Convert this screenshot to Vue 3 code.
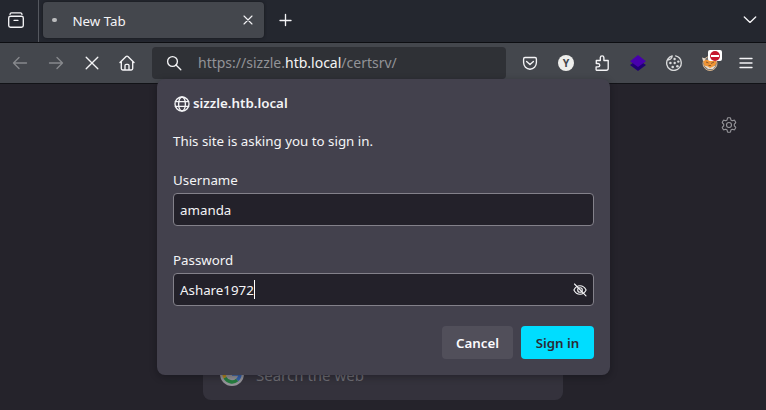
<script setup>
import { ref } from 'vue'

const username = ref('amanda')
const password = ref('Ashare1972')
</script>

<template>
  <div class="browser">
    <header class="tabstrip">
      <div class="recent">
        <svg width="18" height="18" viewBox="0 0 18 18" class="line">
          <path d="M3 3.3Q3.2 1.8 4.5 1.8H13.5Q14.8 1.8 15 3.3" />
          <rect x="1.7" y="5.2" width="14.6" height="11" rx="1.8" />
          <path d="M7 9.3H11" />
        </svg>
      </div>
      <div class="tab">
        <span class="dot"></span>
        <span class="tab-title">New Tab</span>
        <svg width="10" height="10" viewBox="0 0 10 10" class="line thin"><path d="M1 1L9 9M9 1L1 9" /></svg>
      </div>
      <svg class="line plus" width="14" height="14" viewBox="0 0 14 14"><path d="M6.5 1.5V12.5M1 7.5H12" /></svg>
      <svg class="line chevron" width="14" height="10" viewBox="0 0 14 10"><path d="M1.3 2L7 7.4L12.7 2" /></svg>
    </header>

    <nav class="toolbar">
      <div class="cell dim">
        <svg width="16" height="16" viewBox="0 0 16 16" class="line"><path d="M14.5 8H1.5M7 2.5L1.5 8L7 13.5" /></svg>
      </div>
      <div class="cell dim">
        <svg width="16" height="16" viewBox="0 0 16 16" class="line"><path d="M1.5 8H14.5M9 2.5L14.5 8L9 13.5" /></svg>
      </div>
      <div class="cell">
        <svg width="16" height="16" viewBox="0 0 16 16" class="line"><path d="M2.2 2.2L13.8 13.8M13.8 2.2L2.2 13.8" /></svg>
      </div>
      <div class="cell home">
        <svg width="16" height="16" viewBox="0 0 16 16" class="line">
          <path d="M1 7.6L7.1 1.5Q8 .7 8.9 1.5L15 7.6M2.3 6.5V13.6Q2.3 15 3.7 15H12.3Q13.7 15 13.7 13.6V6.5M6 15V10.5Q6 9.3 7.2 9.3H8.8Q10 9.3 10 10.5V15" />
        </svg>
      </div>

      <div class="urlbar">
        <svg width="16" height="16" viewBox="0 0 16 16" class="line">
          <circle cx="6.5" cy="6.5" r="4.9" /><path d="M10 10L14.8 14.8" />
        </svg>
        <span class="url">https://sizzle.<b>htb.local</b>/certsrv/</span>
      </div>

      <div class="cell">
        <svg width="16" height="16" viewBox="0 0 16 16" class="line">
          <path d="M3 2.5H13Q14.4 2.5 14.4 4V7.6A6.4 6.6 0 0 1 1.6 7.6V4Q1.6 2.5 3 2.5ZM4.6 6.4L8 9.6L11.4 6.4" />
        </svg>
      </div>
      <div class="cell"><span class="avatar">Y</span></div>
      <div class="cell">
        <svg width="16" height="18" viewBox="0 0 16 18" class="line">
          <path d="M2.5 16.2H12.3Q14.2 16.2 14.2 14.5V6.5H9.9V3.6Q9.8 1.9 8.1 1.9T6.3 3.6V6.5H2.3V9.5H4Q5.8 9.7 5.8 11.2T4 12.9H2.1V15.3Q2 16.2 3 16.2Z" />
        </svg>
      </div>
      <div class="cell">
        <svg width="16" height="18" viewBox="0 0 16 18">
          <path d="M0 11L3 9H13L16 11L8 17Z" fill="#200073" />
          <path d="M8 1L16 7.2L8 13L0 7.2Z" fill="#4800ad" />
        </svg>
      </div>
      <div class="cell">
        <svg width="16" height="16" viewBox="0 0 16 16" class="line cookie">
          <path d="M6.2 1A7.3 7.3 0 1 0 15.2 7.2A7.3 7.3 0 0 0 9.6 .9M6.2 1Q6 3.4 4.4 4.2Q2.2 5 1 5.4" />
          <g class="chips"><circle cx="8.6" cy="4" r="1.2" /><circle cx="4.4" cy="8" r="1.3" /><circle cx="8.7" cy="8" r="1.2" /><circle cx="12.3" cy="6.6" r="1.2" /><circle cx="6.7" cy="12" r="1.3" /><circle cx="11.4" cy="11.2" r="1.3" /></g>
        </svg>
      </div>
      <div class="cell proxy">
        <svg width="16" height="16" viewBox="0 0 16 16">
          <circle cx="8" cy="8.5" r="7" fill="#70747a" stroke="#d9b48a" />
          <path d="M1 4L5 5L11 4L14.5 7L13.5 10L10 13H6L2.5 11L1.5 7Z" fill="#ef9435" />
          <path d="M0 2.5L3.5 3.5L3 5.5L1 6ZM2 10.5L6 11.5L8 13L11 11.5L14 10.5L11 14H6Z" fill="#e8dccd" />
          <path d="M4 7L6.5 8M9 8.5L12 7M6.5 10.5H9" stroke="#8a5a30" fill="none" />
        </svg>
        <span class="badge"><i></i></span>
      </div>
      <div class="cell">
        <svg width="14" height="14" viewBox="0 0 14 14" class="line"><path d="M1 2.5H13M1 7H13M1 11.5H13" /></svg>
      </div>
    </nav>

    <main class="page">
      <svg class="gear line" width="16" height="16" viewBox="0 0 16 16">
        <path d="M7 .8H9Q9.5 .8 9.6 1.4L9.9 3L11.3 3.8L12.9 3.2Q13.4 3 13.7 3.5L14.7 5.2Q14.9 5.7 14.5 6L13.3 7.1V8.9L14.5 10Q14.9 10.3 14.7 10.8L13.7 12.5Q13.4 13 12.9 12.8L11.3 12.2L9.9 13L9.6 14.6Q9.5 15.2 9 15.2H7Q6.5 15.2 6.4 14.6L6.1 13L4.7 12.2L3.1 12.8Q2.6 13 2.3 12.5L1.3 10.8Q1.1 10.3 1.5 10L2.7 8.9V7.1L1.5 6Q1.1 5.7 1.3 5.2L2.3 3.5Q2.6 3 3.1 3.2L4.7 3.8L6.1 3L6.4 1.4Q6.5 .8 7 .8Z" />
        <circle cx="8" cy="8" r="2.5" />
      </svg>
      <div class="search">
        <svg width="24" height="24" viewBox="0 0 24 24">
          <circle cx="12" cy="12" r="12" fill="#949399" />
          <g fill="none" stroke-width="3.4">
            <path d="M18 6.5A8 8 0 0 0 5 8.2" stroke="#a43b35" />
            <path d="M5 8.2A8 8 0 0 0 5 15.8" stroke="#b5891b" />
            <path d="M5 15.8A8 8 0 0 0 17.2 18" stroke="#267d40" />
            <path d="M17.2 18A8 8 0 0 0 20 12H12" stroke="#3562ad" />
          </g>
        </svg>
        <span>Search the web</span>
      </div>
    </main>

    <section class="dialog">
      <div class="origin">
        <svg width="16" height="16" viewBox="0 0 16 16" class="line">
          <circle cx="8" cy="8" r="7" /><ellipse cx="8" cy="8" rx="3.4" ry="7" /><path d="M1.4 5.6H14.6M1.4 10.4H14.6" />
        </svg>
        <strong>sizzle.htb.local</strong>
      </div>
      <p class="message">This site is asking you to sign in.</p>
      <div class="label">Username</div>
      <div class="field">{{ username }}</div>
      <div class="label second">Password</div>
      <div class="field">
        {{ password }}<span class="caret"></span>
        <svg width="14" height="14" viewBox="0 0 14 14" class="line eye">
          <path d="M.9 7Q3 2.7 7 2.7T13.1 7Q11 11.3 7 11.3T.9 7Z" /><circle cx="7" cy="7" r="2.3" /><path d="M1.5 1L13 12.8" />
        </svg>
      </div>
      <div class="actions">
        <button class="cancel">Cancel</button>
        <button class="primary">Sign in</button>
      </div>
    </section>
  </div>
</template>

<style>
body { margin: 0; background: #25232b; }
</style>

<style scoped>
.browser {
  position: relative;
  width: 766px;
  height: 410px;
  overflow: hidden;
  display: flex;
  flex-direction: column;
  background: #25232b;
  color: #f4f4f6;
  font-family: "Noto Sans", sans-serif;
  font-size: 13.33px;
}
svg { display: block; flex: none; }
.line {
  fill: none;
  stroke: currentColor;
  stroke-width: 1.35;
  stroke-linecap: round;
  stroke-linejoin: round;
}
.thin { stroke-width: 1.1; }
.tabstrip {
  box-sizing: border-box;
  height: 43px;
  flex: none;
  display: flex;
  background: #24272f;
  border-bottom: 1px solid #0d0e12;
}
.recent {
  box-sizing: border-box;
  width: 39px;
  padding: 11px 0 0 7px;
  border-right: 1px solid #55585f;
}
.tab {
  box-sizing: border-box;
  width: 221px;
  height: 36px;
  margin: 2px 0 0 4px;
  padding: 0 11px 0 9px;
  display: flex;
  align-items: center;
  border-radius: 4px;
  background: #44474d;
  box-shadow: 0 0 3px #15171c;
}
.dot { width: 5px; height: 4px; border-radius: 2px; background: #bbbcbd; }
.tab-title { flex: 1; margin: 2px 0 0 15.4px; line-height: 20px; }
.plus { margin: 13px 0 0 15px; }
.chevron { margin: 15px 9px 0 auto; }
.toolbar {
  box-sizing: border-box;
  height: 41px;
  flex: none;
  display: flex;
  align-items: center;
  padding: 0 2px;
  border-bottom: 1px solid #121317;
  background: #44474d;
}
.cell {
  box-sizing: border-box;
  width: 36px;
  height: 36px;
  display: flex;
  align-items: center;
  justify-content: center;
}
.home { padding-right: 1.4px; }
.dim { color: #87898d; }
.urlbar {
  width: 354px;
  height: 32px;
  margin: 0 6px;
  display: flex;
  align-items: center;
  border-radius: 4px;
  background: #2f3136;
}
.urlbar svg { margin-left: 14px; }
.url { margin-left: 16px; font-size: 14px; line-height: 20px; color: #929397; white-space: nowrap; }
.url b { font-weight: 400; color: #f4f4f4; }
.avatar {
  width: 16px;
  height: 16px;
  border-radius: 50%;
  background: #eeeeec;
  color: #44474d;
  font-size: 10.5px;
  line-height: 16px;
  font-weight: 700;
  text-align: center;
}
.cookie { color: #d9dadb; }
.chips { fill: currentColor; stroke: none; }
.proxy { position: relative; }
.badge {
  position: absolute;
  left: 16px;
  top: 5px;
  width: 14px;
  height: 11px;
  display: flex;
  align-items: center;
  justify-content: center;
  border-radius: 2px;
  background: #fff;
}
.badge i {
  width: 10px;
  height: 10px;
  display: flex;
  align-items: center;
  justify-content: center;
  border-radius: 50%;
  background: #c5162d;
}
.badge i::after { content: ""; width: 8px; height: 2px; background: #fff; }
.page {
  flex: 1;
  display: flex;
  flex-direction: column;
  box-sizing: border-box;
  padding-top: 33px;
}
.gear { align-self: flex-end; margin-right: 29px; color: #97969b; stroke-width: 1.1; }
.search {
  box-sizing: border-box;
  width: 360px;
  height: 52px;
  margin: 215px 0 0 203px;
  padding-left: 17px;
  display: flex;
  align-items: center;
  gap: 12px;
  border-radius: 8px;
  background: #34323c;
  color: #6d6c73;
  font-size: 15px;
}
.search span { padding-top: 1px; }
.dialog {
  position: absolute;
  left: 157px;
  top: 79px;
  box-sizing: border-box;
  width: 453px;
  height: 296px;
  padding: 16px;
  border-radius: 8px;
  background: #43414d;
  box-shadow: 0 2px 7px rgba(10, 10, 14, .35);
}
.origin { height: 17px; display: flex; align-items: center; gap: 4px; line-height: 17px; }
.origin svg { margin-left: .5px; }
.origin strong { margin-left: -.5px; font-weight: 600; }
.message { height: 20px; margin: 19px 0 0; line-height: 20px; }
.label { height: 20px; margin: 19px 0 3px; line-height: 20px; }
.label.second { margin-top: 24px; }
.field {
  box-sizing: border-box;
  height: 33px;
  padding: 0 6px;
  display: flex;
  align-items: center;
  border: 1px solid #83818a;
  border-radius: 4px;
  background: #23212a;
}
.caret { width: 1px; height: 19px; background: #fff; }
.eye { margin-left: auto; stroke-width: 1.1; }
.actions { display: flex; justify-content: flex-end; gap: 8px; margin-top: 20px; }
button {
  height: 33px;
  padding: 0;
  border: 0;
  border-radius: 4px;
  font: 600 13.33px "Noto Sans", sans-serif;
}
.cancel { width: 71px; background: #514f5a; color: #fbfbfe; }
.primary { width: 73px; background: #00ddff; color: #2b2a33; }
</style>
